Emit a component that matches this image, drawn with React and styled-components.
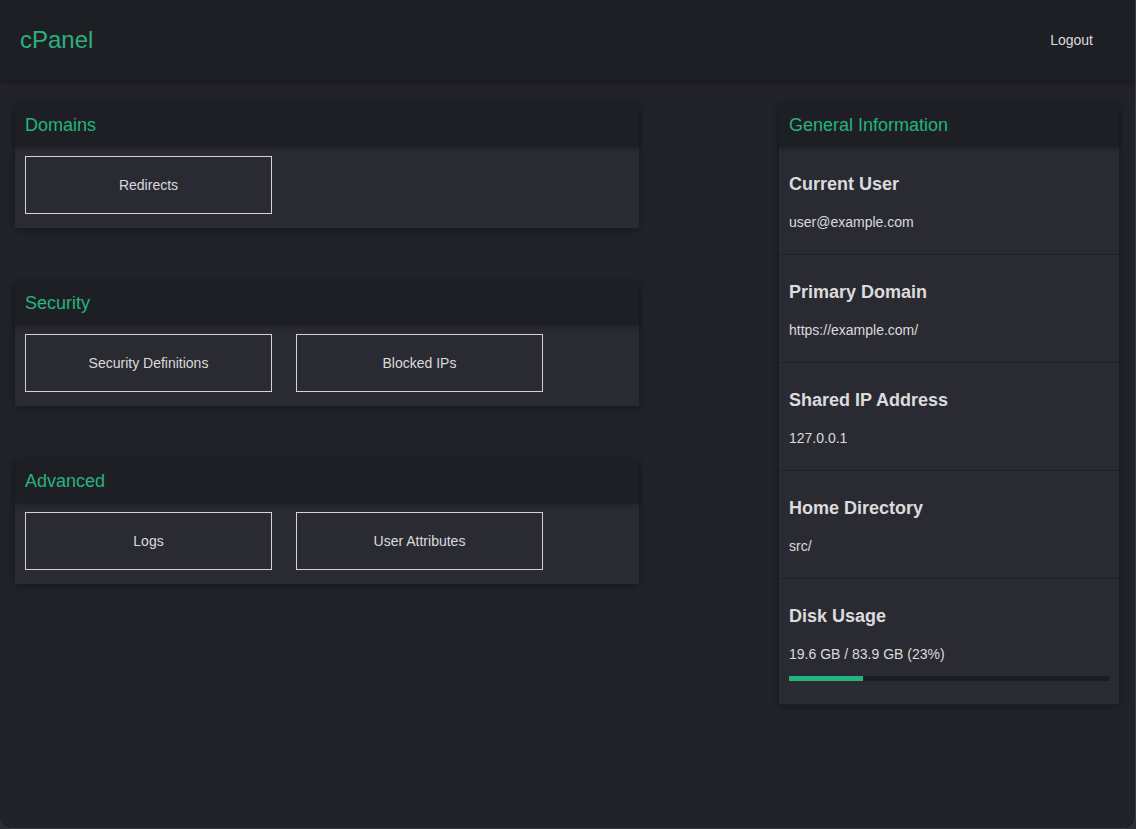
import React from "react";
import styled, { createGlobalStyle } from "styled-components";

const GlobalStyle = createGlobalStyle`
    html, body {
        margin: 0;
        padding: 0;
        background: #2b2c34;
    }
    body {
        font-family: "Liberation Sans", Arial, sans-serif;
    }
`;

const sections = [
    { title: "Domains", items: ["Redirects"] },
    { title: "Security", items: ["Security Definitions", "Blocked IPs"] },
    { title: "Advanced", items: ["Logs", "User Attributes"] },
];

const info = [
    { label: "Current User", value: "user@example.com" },
    { label: "Primary Domain", value: "https://example.com/" },
    { label: "Shared IP Address", value: "127.0.0.1" },
    { label: "Home Directory", value: "src/" },
];

const disk = { used: 19.6, total: 83.9 };

export default function App() {
    const percent = Math.round((disk.used / disk.total) * 100);
    return (
        <>
            <GlobalStyle />
            <Frame>
                <Header>
                    <Brand>cPanel</Brand>
                    <LogoutLink href="#">Logout</LogoutLink>
                </Header>
                <Main>
                    <LeftColumn>
                        {sections.map(({ title, items }) => (
                            <Card key={title}>
                                <CardHeader>{title}</CardHeader>
                                <ToolGrid>
                                    {items.map((item) => (
                                        <ToolButton key={item}>{item}</ToolButton>
                                    ))}
                                </ToolGrid>
                            </Card>
                        ))}
                    </LeftColumn>
                    <Sidebar>
                        <CardHeader>General Information</CardHeader>
                        {info.map(({ label, value }) => (
                            <InfoRow key={label}>
                                <InfoLabel>{label}</InfoLabel>
                                <InfoValue>{value}</InfoValue>
                            </InfoRow>
                        ))}
                        <InfoRow last>
                            <InfoLabel>Disk Usage</InfoLabel>
                            <InfoValue>
                                {disk.used} GB / {disk.total} GB ({percent}%)
                            </InfoValue>
                            <Progress>
                                <ProgressFill style={{ width: `${percent}%` }} />
                            </Progress>
                        </InfoRow>
                    </Sidebar>
                </Main>
            </Frame>
        </>
    );
}

const Frame = styled.div`
    height: 100vh;
    box-sizing: border-box;
    background: #22222b;
    border-right: 1px solid #3a3b45;
    border-bottom: 1px solid #3a3b45;
    border-radius: 0 0 10px 10px;
    overflow: hidden;
    display: flex;
    flex-direction: column;
`;

const Header = styled.header`
    height: 80px;
    flex-shrink: 0;
    display: flex;
    align-items: center;
    justify-content: space-between;
    padding: 0 42px 0 20px;
    background: #1e1f25;
    box-shadow: 0 2px 6px rgba(0, 0, 0, 0.35);
    position: relative;
    z-index: 1;
`;

const Brand = styled.div`
    color: #22b57c;
    font-size: 24px;
`;

const LogoutLink = styled.a`
    color: #dcdcdc;
    font-size: 14px;
    text-decoration: none;
`;

const Main = styled.main`
    display: flex;
    justify-content: space-between;
    align-items: flex-start;
    padding: 24px 16px 0 15px;
`;

const LeftColumn = styled.div`
    width: 624px;
    display: flex;
    flex-direction: column;
    gap: 54px;
`;

const Card = styled.section`
    background: #2a2a33;
    box-shadow: 0 2px 8px rgba(0, 0, 0, 0.35);
`;

const CardHeader = styled.h2`
    margin: 0;
    height: 43px;
    display: flex;
    align-items: center;
    padding: 0 10px;
    font-size: 18px;
    font-weight: normal;
    color: #22b57c;
    background: #1e1f24;
    box-shadow: 0 2px 4px rgba(0, 0, 0, 0.25);
    position: relative;
`;

const ToolGrid = styled.div`
    display: flex;
    gap: 24px;
    padding: 9px 10px 14px;
`;

const ToolButton = styled.button`
    width: 247px;
    height: 58px;
    box-sizing: border-box;
    background: transparent;
    border: 1px solid #d4d4d4;
    color: #dcdcdc;
    font-family: inherit;
    font-size: 14px;
    cursor: pointer;
`;

const Sidebar = styled.aside`
    width: 340px;
    background: #2a2a33;
    box-shadow: 0 2px 8px rgba(0, 0, 0, 0.35);
`;

const InfoRow = styled.div`
    padding: 26px 10px ${({ last }) => (last ? "23px" : "24px")};
    border-bottom: 1px solid #202128;
`;

const InfoLabel = styled.h3`
    margin: 0;
    line-height: 22px;
    font-size: 18px;
    font-weight: bold;
    color: #dcdcdc;
`;

const InfoValue = styled.p`
    margin: 19px 0 0;
    line-height: 16px;
    font-size: 14px;
    color: #dcdcdc;
`;

const Progress = styled.div`
    margin-top: 14px;
    height: 5px;
    background: #1c1d22;
`;

const ProgressFill = styled.div`
    height: 100%;
    background: #22b57c;
`;
